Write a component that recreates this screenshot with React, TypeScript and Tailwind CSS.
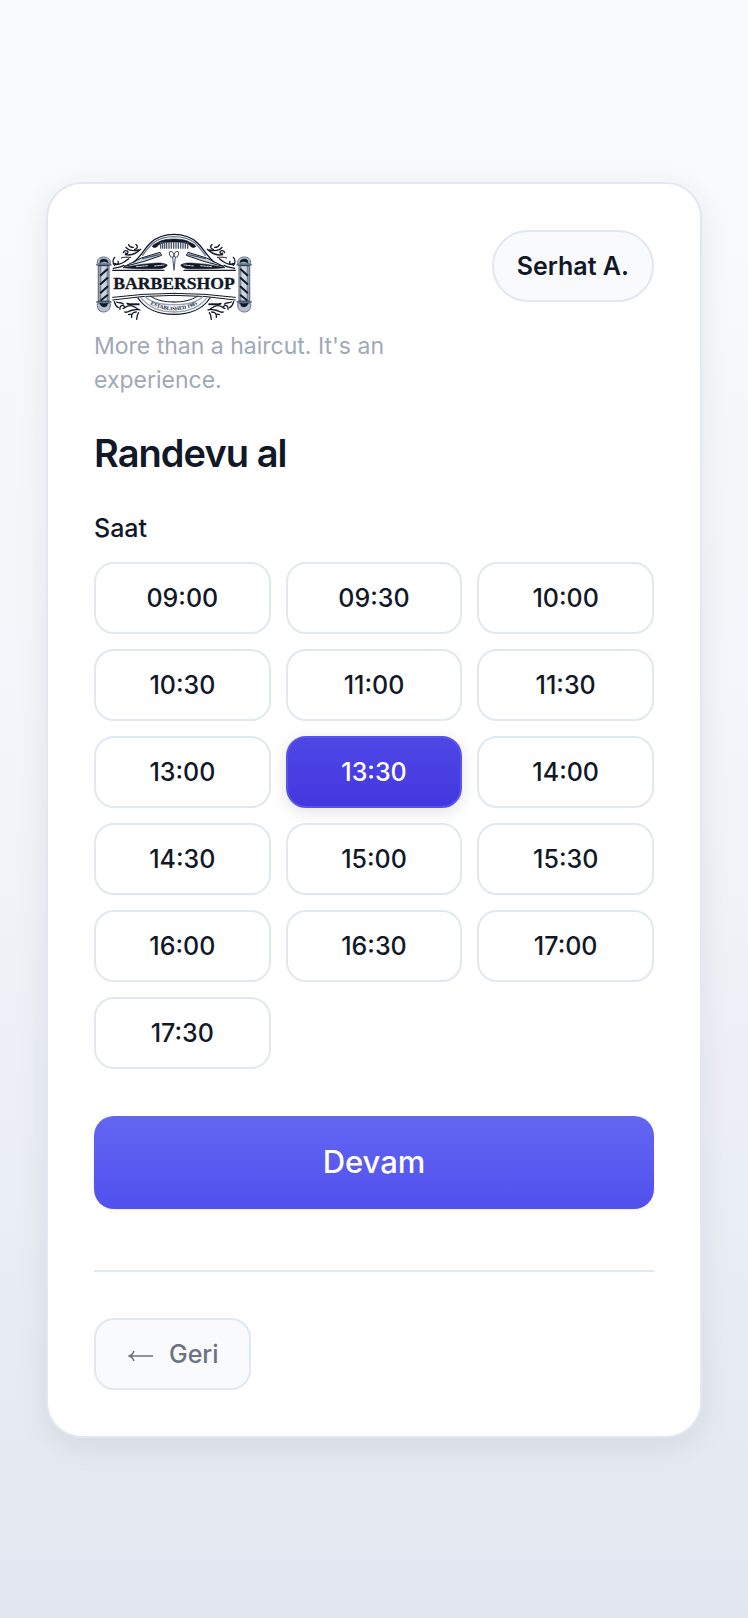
import { clsx } from 'clsx';

const SLOTS = [
  '09:00',
  '09:30',
  '10:00',
  '10:30',
  '11:00',
  '11:30',
  '13:00',
  '13:30',
  '14:00',
  '14:30',
  '15:00',
  '15:30',
  '16:00',
  '16:30',
  '17:00',
  '17:30',
];

function Pole() {
  return (
    <g>
      <rect x="44" y="136" width="31" height="110" fill="#cbd5e1" stroke="#475569" strokeWidth="3" />
      <path d="M49 136v110M71 136v110" stroke="#7c8799" strokeWidth="6" />
      <path d="M50 166 70 148M50 192 70 174M50 218 70 200M52 240 70 226" strokeWidth="6" />
      <path
        d="M40 130c-2-13 8-19 19-19s22 6 20 19z"
        fill="#b6c0ce"
        stroke="#64748b"
        strokeWidth="3"
      />
      <path d="M48 129c-2-9 5-13 12-12 8 0 12 4 13 12-8-5-16-5-25 0z" fill="#111827" />
      <path
        d="M40 252c-2 16 8 24 19 24s22-8 20-24z"
        fill="#b6c0ce"
        stroke="#64748b"
        strokeWidth="3"
      />
      <path d="M46 246c3 13 11 18 22 13l5-13c-8 6-18 6-27 0z" fill="#111827" />
      <path d="M39 134h41M39 246h41" stroke="#64748b" strokeWidth="6" />
      <path d="M44 137h31M44 243h31" strokeWidth="2" />
    </g>
  );
}

function LogoSide() {
  return (
    <g>
      <Pole />
      {/* upper scrolls */}
      <g strokeWidth="4">
        <path d="M92 136c-7-8-5-18 0-24M92 130c8 6 14 0 10-6M94 134c16 0 28-8 40-18" />
        <path d="M118 98c2-8 12-8 14-2 0 5-6 6-8 3M124 104c20 4 34-4 46-16" />
        <path d="M126 82c8 10 20 12 38 8M134 74c2 6 8 8 14 8M152 88c10-2 10-10 4-14" />
        <path d="M112 114c8-4 18-2 28-2" strokeWidth="3" />
        <path d="M88 145c10-2 22-3 32-9" />
      </g>
      {/* lower scrolls */}
      <g strokeWidth="4">
        <path d="M91 245c2 8 4 14 12 18M98 246c8 4 14 0 20 6M108 268c-2-10 6-14 12-10 4 4 0 8-3 7" />
        <path d="M124 262c10-8 24-6 38 6M122 276c10 4 16-6 26-6 8 0 14-4 20 0" />
        <path d="M143 292c-2-10 4-16 14-16M158 298c2-8 0-14 6-20M134 284c4-2 8-2 10 0" />
        <path d="M130 251c12 4 22 0 34 2" strokeWidth="6" strokeDasharray="4 4" />
      </g>
      {/* razors */}
      <path d="M122 139 172 114 228 97l5 9-52 18z" fill="#cbd5e1" strokeWidth="3" />
      <path d="M176 116l52-13" stroke="#475569" strokeWidth="4" strokeDasharray="3 3" />
      <path
        d="M118 143c30-6 54-11 80-12 18-2 38-4 52 4-6 12-26 12-42 11-28 1-60 0-90-3z"
        fill="#111827"
        strokeWidth="2"
      />
      <path d="M158 140l34-3M212 138l28-3" stroke="#e5e7eb" strokeWidth="3" strokeDasharray="5 4" />
      {/* frame of the name plate */}
      <path d="M86 151h154" strokeWidth="4" />
      <path d="M86 232q90-12 184-12M86 240q90-14 184-14" strokeWidth="3" />
      {/* arch */}
      <path d="M150 126c24-20 32-42 50-58 20-18 44-25 70-25" strokeWidth="4" />
      <path d="M176 106c12-16 20-28 32-38 18-13 38-18 62-18" stroke="#64748b" strokeWidth="4" />
      <path
        d="M206 80c0-8 8-8 14-12 14-9 32-11 50-11v9c-20 0-32 1-44 7-6 6-12 14-20 7z"
        fill="#111827"
        strokeWidth="2"
      />
      {/* badge under the name */}
      <path d="M162 234c22 34 64 49 108 49" strokeWidth="4" />
      <path d="M171 233c22 29 60 43 99 43" stroke="#94a3b8" strokeWidth="4" />
      <path d="M184 230c18 18 48 24 86 24" stroke="#94a3b8" strokeWidth="4" />
      <path d="M200 229c18 12 42 17 70 17" strokeWidth="3" />
    </g>
  );
}

function Logo() {
  return (
    <svg
      viewBox="30 30 480 276"
      className="block w-40"
      role="img"
      aria-label="Barbershop"
      fill="none"
      stroke="#111827"
      strokeLinecap="round"
      strokeLinejoin="round"
    >
      <LogoSide />
      <g transform="matrix(-1 0 0 1 540 0)">
        <LogoSide />
      </g>
      {/* comb */}
      <path
        d="M230 66v20M236 66v20M242 66v20M248 66v20M255 66v20M262 66v20M269 66v20M276 66v20M283 66v20M290 66v20M297 66v20M304 66v20M311 66v20"
        stroke="#475569"
        strokeWidth="4"
        strokeLinecap="butt"
      />
      {/* scissors */}
      <g stroke="#475569" strokeWidth="3">
        <ellipse cx="263" cy="103" rx="6" ry="9" transform="rotate(-22 263 103)" />
        <ellipse cx="277" cy="103" rx="6" ry="9" transform="rotate(22 277 103)" />
        <path d="M266 112l4 38M274 112l-4 38" />
      </g>
      <path id="badge-arc" d="M192 249q78 44 156 0" stroke="none" />
      <g fill="#111827" stroke="none" fontFamily="'Liberation Serif', serif" fontWeight="700">
        <text x="270" y="206" fontSize="53" textAnchor="middle" stroke="#111827" strokeWidth="1">
          BARBERSHOP
        </text>
        <text fontSize="16" textAnchor="middle">
          <textPath href="#badge-arc" startOffset="50%">
            ESTABLISHED 1985
          </textPath>
        </text>
      </g>
    </svg>
  );
}

interface SlotProps {
  time: string;
  selected?: boolean;
}

function Slot({ time, selected }: SlotProps) {
  return (
    <button
      type="button"
      aria-pressed={selected}
      className={clsx(
        'h-[72px] rounded-[20px] border-2 pt-0.5 text-[25px] font-medium',
        selected
          ? 'border-[#5b54ea] bg-linear-to-b from-[#4f46e5] to-[#4338e0] text-white shadow-[0_4px_16px_rgba(15,23,42,0.12)]'
          : 'border-[#e2e8f0] bg-white text-[#111827]'
      )}
    >
      {time}
    </button>
  );
}

export default function App() {
  return (
    <div className="flex min-h-screen items-center bg-linear-to-b from-[#fafbfd] via-[#f1f5f9] to-[#e2e6f0] px-[46px] pt-[50px] pb-12 font-['Inter',sans-serif] text-[#111827]">
      <main className="w-full rounded-[36px] border-2 border-[#e2e8f0] bg-white p-[46px] shadow-[0_8px_32px_rgba(15,23,42,0.08)]">
        <header className="flex items-start justify-between">
          <div className="max-w-[310px]">
            <Logo />
            <p className="mt-[7px] text-[23px] leading-[34px] text-[#9fa8b8]">
              More than a haircut. It's an experience.
            </p>
          </div>
          <button
            type="button"
            className="h-[72px] rounded-full border-2 border-[#e2e8f0] bg-[#f8fafc] px-[23px] pt-0.5 text-[25px] font-semibold"
          >
            Serhat A.
          </button>
        </header>

        <h1 className="mt-[33px] text-[38px] leading-[46px] font-semibold tracking-tight">
          Randevu al
        </h1>

        <h2 id="slots-label" className="mt-[34px] text-[25px] leading-[37px] font-medium">
          Saat
        </h2>
        <div
          role="group"
          aria-labelledby="slots-label"
          className="mt-[15px] grid grid-cols-3 gap-[15px]"
        >
          {SLOTS.map((time) => (
            <Slot key={time} time={time} selected={time === '13:30'} />
          ))}
        </div>

        <button
          type="button"
          className="mt-[47px] h-[93px] w-full rounded-[20px] bg-linear-to-b from-[#6366f1] to-[#5150ef] text-[31px] font-medium text-white shadow-[0_1px_3px_rgba(15,23,42,0.08)]"
        >
          Devam
        </button>

        <footer className="mt-[61px] border-t-2 border-[#e2e8f0] pt-[46px]">
          <button
            type="button"
            className="flex h-[72px] items-center gap-[15px] rounded-[20px] border-2 border-[#e2e8f0] bg-[#f8fafc] px-[30px] pt-0.5 text-[25px] font-medium text-[#6b7280]"
          >
            <svg
              viewBox="0 0 28 16"
              className="w-7"
              fill="none"
              stroke="currentColor"
              strokeWidth="1.5"
              aria-hidden="true"
            >
              <path d="M3 9h24M8 4C7 7 5 8.500 2.500 9 5 9.500 7 11 8 14" />
            </svg>
            Geri
          </button>
        </footer>
      </main>
    </div>
  );
}
